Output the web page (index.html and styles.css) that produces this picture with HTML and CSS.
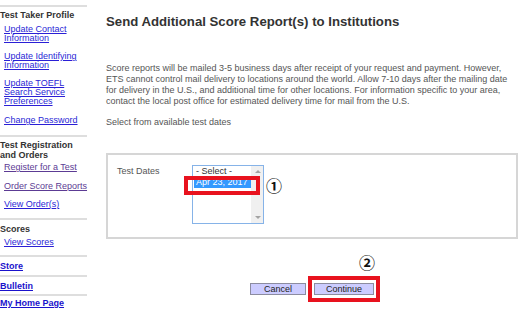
FILE: index.html
```html
<!DOCTYPE html>
<html>
<head>
<meta charset="utf-8">
<link rel="stylesheet" href="styles.css">
</head>
<body>
<div class="page">
  <nav class="sidebar">
    <div class="rule r1"></div>
    <div class="sec-title t1">Test Taker Profile</div>
    <ul class="links l1">
      <li><a href="#">Update Contact Information</a></li>
      <li><a href="#">Update Identifying Information</a></li>
      <li><a href="#">Update TOEFL Search Service Preferences</a></li>
      <li class="gap10"><a href="#">Change Password</a></li>
    </ul>
    <div class="rule r2"></div>
    <div class="sec-title t2">Test Registration and Orders</div>
    <ul class="links l2">
      <li><a href="#" class="visited">Register for a Test</a></li>
      <li class="gap10"><a href="#" class="visited">Order Score Reports</a></li>
      <li><a href="#">View Order(s)</a></li>
    </ul>
    <div class="rule r3"></div>
    <div class="sec-title t3">Scores</div>
    <ul class="links l3">
      <li><a href="#">View Scores</a></li>
    </ul>
    <div class="rule r4"></div>
    <a href="#" class="top-link tl1">Store</a>
    <div class="rule r5"></div>
    <a href="#" class="top-link tl2">Bulletin</a>
    <div class="rule r6"></div>
    <a href="#" class="top-link tl3">My Home Page</a>
  </nav>

  <main class="main">
    <h1 class="title">Send Additional Score Report(s) to Institutions</h1>
    <p class="intro">Score reports will be mailed 3-5 business days after receipt of your request and payment. However, ETS cannot control mail delivery to locations around the world. Allow 7-10 days after the mailing date for delivery in the U.S., and additional time for other locations. For information specific to your area, contact the local post office for estimated delivery time for mail from the U.S.</p>
    <p class="select-note">Select from available test dates</p>

    <div class="panel">
      <div class="field-label">Test Dates</div>
      <div class="listbox-wrap">
        <div class="listbox">
          <div class="options">
            <div class="option">- Select -</div>
            <div class="option selected">Apr 23, 2017</div>
          </div>
          <div class="scrollbar">
            <span class="arrow up"></span>
            <span class="arrow down"></span>
          </div>
        </div>
        <div class="mark mark-select"></div>
        <div class="num num1">①</div>
      </div>
    </div>

    <div class="actions">
      <button class="btn btn-cancel" type="button">Cancel</button>
      <div class="continue-wrap">
        <button class="btn btn-continue" type="button">Continue</button>
        <div class="mark mark-continue"></div>
        <div class="num num2">②</div>
      </div>
    </div>
  </main>
</div>
</body>
</html>
```

FILE: styles.css
```css
html, body {
  margin: 0;
  padding: 0;
  background: #ffffff;
}

body {
  font-family: "Liberation Sans", Arial, sans-serif;
  font-size: 9px;
  color: #444;
  overflow: hidden;
}

.page {
  display: flex;
  align-items: flex-start;
}

/* ---------- Sidebar ---------- */
.sidebar {
  width: 88px;
  flex: none;
  display: flex;
  flex-direction: column;
}

.rule {
  height: 2px;
  width: 87px;
  background: #dedede;
}
.r1 { margin-top: 5px; }
.r2 { margin-top: 10px; }
.r3 { margin-top: 9px; }
.r4 { margin-top: 8px; }
.r5 { margin-top: 4px; }
.r6 { margin-top: 3px; }

.sec-title {
  font-weight: bold;
  color: #333;
  font-size: 9px;
  line-height: 10px;
}
.t1 { margin-top: 3px; line-height: 11px; }
.t2 { margin-top: 3px; }
.t3 { margin-top: 4px; }

.links {
  list-style: none;
  margin: 0;
  padding: 0 0 0 4px;
}
.l1 { margin-top: 4px; }
.l2 { margin-top: 3px; }
.l3 { margin-top: 4px; }

.links li {
  line-height: 9px;
  margin-top: 9px;
}
.links li:first-child { margin-top: 0; }
.links li.gap10 { margin-top: 10px; }

.links a {
  color: #2a1fd6;
  text-decoration: underline;
}
.links a.visited {
  color: #5c3b94;
}

.top-link {
  display: block;
  font-weight: bold;
  color: #1a12cc;
  text-decoration: underline;
  line-height: 9px;
  white-space: nowrap;
}
.tl1 { margin-top: 5px; }
.tl2 { margin-top: 5px; }
.tl3 { margin-top: 3px; }

/* ---------- Main ---------- */
.main {
  margin-left: 18px;
  width: 412px;
  flex: none;
}

.title {
  margin: 14px 0 0 0;
  font-size: 13.2px;
  line-height: 16px;
  font-weight: bold;
  color: #333;
}

.intro {
  margin: 33px 0 0 0;
  line-height: 11px;
  color: #555;
}

.select-note {
  margin: 10px 0 0 0;
  line-height: 11px;
  color: #555;
}

.panel {
  margin-top: 25px;
  border: 2px solid #d6d6d6;
  height: 72px;
  box-sizing: content-box;
  display: flex;
  align-items: flex-start;
  padding: 10px 0 0 9px;
}

.field-label {
  width: 75px;
  flex: none;
  line-height: 11px;
  margin-top: 1px;
  color: #555;
}

.listbox-wrap {
  position: relative;
}

.listbox {
  width: 70px;
  height: 57px;
  border: 1px solid #86b3e8;
  display: flex;
  background: #fff;
}

.options {
  flex: 1;
  display: flex;
  flex-direction: column;
  align-items: flex-start;
  padding-left: 1px;
}

.option {
  line-height: 11px;
  padding: 0 2px;
  color: #333;
  white-space: nowrap;
}
.option.selected {
  background: #3399ff;
  color: #fff;
  padding-right: 3px;
}

.scrollbar {
  width: 13px;
  background: #f0f0f0;
  position: relative;
}
.arrow {
  position: absolute;
  left: 4px;
  width: 0;
  height: 0;
  border-left: 3px solid transparent;
  border-right: 3px solid transparent;
}
.arrow.up {
  top: 4px;
  border-bottom: 3px solid #a3a3a3;
}
.arrow.down {
  bottom: 4px;
  border-top: 3px solid #a3a3a3;
}

/* annotations */
.mark {
  position: absolute;
  border: 4px solid #e8121e;
  box-sizing: border-box;
}
.mark-select {
  left: -8px;
  top: 11px;
  width: 76px;
  height: 19px;
}

.num {
  position: absolute;
  font-family: "Noto Sans CJK JP", "DejaVu Sans", sans-serif;
  font-weight: bold;
  font-size: 16px;
  line-height: 16px;
  color: #111;
}
.num1 {
  left: 74px;
  top: 12px;
}

.actions {
  margin-top: 44px;
  display: flex;
  justify-content: center;
  gap: 8px;
}

.btn {
  font-family: "Liberation Sans", Arial, sans-serif;
  font-size: 9px;
  line-height: 10px;
  height: 12px;
  padding: 0;
  margin: 0;
  background: #ccccff;
  color: #222;
  border: 1px solid #8c8ca0;
  border-radius: 0;
}
.btn-cancel { width: 56px; }
.btn-continue { width: 60px; display: block; }

.continue-wrap {
  position: relative;
}

.mark-continue {
  left: -6px;
  top: -7px;
  width: 72px;
  height: 26px;
}

.num2 {
  left: 45px;
  top: -29px;
}
```
